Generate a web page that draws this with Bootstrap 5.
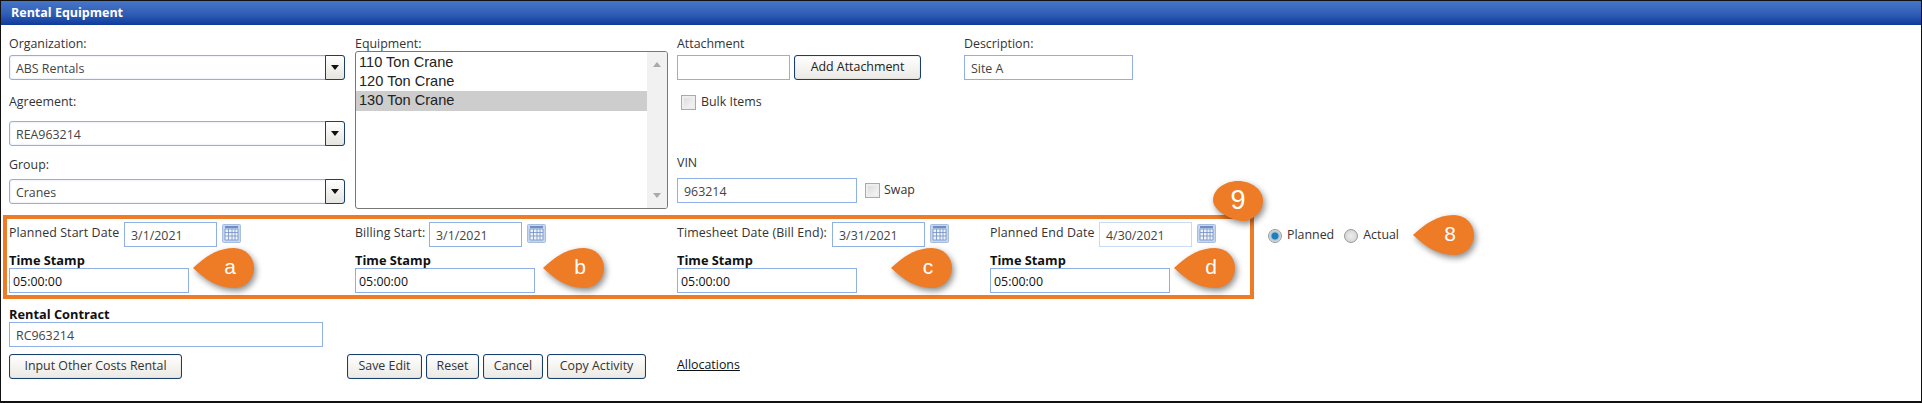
<!DOCTYPE html>
<html lang="en">
<head>
<meta charset="utf-8">
<title>Rental Equipment</title>
<link rel="stylesheet" href="https://cdn.jsdelivr.net/npm/bootstrap@5.3.0/dist/css/bootstrap.min.css">
<style>
html,body{margin:0;background:#fff}
body{font-family:"Open Sans","Noto Sans","Liberation Sans",sans-serif;font-size:12.4px;color:#333}
.sheet{width:1922px;height:403px;border:solid #111;border-width:1px 1px 2px 1px;position:relative;overflow:hidden;background:#fff}
.topbar{height:24px;background:linear-gradient(#4676c8,#2f5db5 55%,#0f3a9c);color:#fff;font-weight:700;font-size:12.5px;line-height:23px;padding-left:10px}
.upper{height:190px;padding-top:10px}
.cola{width:354px;padding-left:8px}
.colb{width:322px}
.colc{width:287px}
.cold{width:300px}
.lbl{display:block;height:20px;line-height:18px;margin:0;white-space:nowrap}
.lbl-agree{margin-top:13px;margin-bottom:8px}
.lbl-group{margin-top:10px;margin-bottom:3px}
.lbl-vin{margin-top:46px;margin-bottom:4px}
.field{height:25px;border:1px solid #8eb0e4;background:#fff;color:#444;padding-left:6px;box-sizing:border-box;white-space:nowrap;font:inherit;line-height:25px;display:block}
.pick{width:336px;border-radius:3px;display:flex;justify-content:space-between;box-shadow:inset 0 0 2px #c8d8f0;align-items:stretch}
.pick-btn{width:20px;border:1px solid #17406e;border-radius:0 3px 3px 0;margin:-1px -1px -1px 0;background:linear-gradient(#fff,#e6e4df);display:flex;align-items:center;justify-content:center}
.pick-btn i{border:solid transparent;border-width:5px 4px 0 4px;border-top-color:#111;display:block}
.equip{width:313px;height:158px;border:1px solid #777;border-radius:3px;display:flex;font:14.6px/19px "Liberation Sans",Arial,sans-serif;color:#222;margin-top:-4px;overflow:hidden}
.equip-list{flex:1;padding:1px 0 0;list-style:none;margin:0}
.equip-list li{padding-left:3px;height:19px}
.equip-list li.sel{background:#cdcdcd;height:20px}
.equip-bar{width:20px;background:#f1f1f1;display:flex;flex-direction:column;justify-content:space-between;align-items:center;padding:10px 0}
.equip-bar i{display:block;border:solid transparent;border-width:0 4px 5px 4px;border-bottom-color:#aaa}
.equip-bar i+i{border-width:5px 4px 0 4px;border-top-color:#aaa;border-bottom-color:transparent}
.act{height:25px;background:linear-gradient(#fff,#ebe9e4);border:1px solid #17406e;border-radius:3px;color:#333;font:inherit;padding:0;box-shadow:inset 0 0 1px #999}
.w-attach{width:113px}.w-addbtn{width:127px;color:#222}.w-vin{width:180px}.w-desc{width:169px}.w-contract{width:314px;margin-top:2px}
.w-other{width:173px}.w-save{width:75px}.w-reset{width:53px}.w-cancel{width:60px}.w-copy{width:99px}
.bulk{height:16px;margin:12px 0 0 4px;gap:5px;padding-top:4px}
.swap{margin-left:8px;gap:4px}
.tick{width:15px;height:15px;border:1px solid #aaa;background:linear-gradient(135deg,#d8d8d8,#fafafa);box-shadow:inset 0 0 0 2px #eee;display:inline-block;flex:none}
.frame{position:absolute;left:2px;top:214px;width:1251px;height:84px;border:4px solid #ee7b26;display:flex;padding:3px 0 0 2px}
.slot{display:flex;flex-direction:column}
.s1{width:346px}.s2{width:322px}.s3{width:313px}.s4{width:260px}
.date-row{display:flex;align-items:center;height:25px;gap:5px;margin-bottom:7px}
.date-row .field{width:93px}
.tag-1{width:110px}.tag-2{width:69px}.tag-3{width:150px}.tag-4{width:104px}
.soft{border-color:#c9daf3}
.tag-1,.tag-2,.tag-3,.tag-4{white-space:nowrap;letter-spacing:.1px;margin-top:-3px}
.cal{width:19px;height:19px;flex:none;margin-top:-3px}
.stamp{font-weight:700;color:#111;line-height:14px;height:13px;margin-top:-1px;font-size:12.8px;white-space:nowrap}
.stamp-in{width:180px;padding-left:3px;margin-top:2px;color:#111}
.lower{position:absolute;left:8px;top:306px}
.lower .stamp{margin:0 0 1px}
.bottom-row{position:absolute;left:8px;top:353px;width:800px;display:flex}
.act-group{margin-left:165px;gap:4px}
.pin{position:absolute;display:block;filter:drop-shadow(2px 3px 3px rgba(0,0,0,.45))}
.pin-wrap{position:absolute;width:62px;height:42px;top:246px}
.pin-wrap span{position:absolute;right:4px;width:42px;top:0;height:42px;text-align:center;color:#fff;font:21px/40px "Liberation Sans",Arial,sans-serif}
.p-a{left:192px}.p-b{left:542px}.p-c{left:890px}.p-d{left:1173px}.p-8{left:1412px;top:213px}
.pin-nine{position:absolute;left:1212px;top:179px;width:50px;height:44px}
.pin-nine span{position:absolute;inset:0;text-align:center;color:#fff;font:27px/40px "Liberation Sans",Arial,sans-serif}
.rad{position:absolute;top:227px;left:1267px;display:flex;align-items:center;height:15px}
.rad-dot{width:14px;height:14px;border-radius:50%;border:1px solid #999;background:radial-gradient(circle,#eee,#ccc);flex:none}
.rad-dot.on{background:radial-gradient(circle,#1f7fb8 0 3px,#a9c5d8 4px,#ddd 6px)}
.rad-txt{margin-left:5px}
.rad-dot+.rad-txt+.rad-dot{margin-left:10px}
.alloc{color:#111;text-decoration:underline;position:absolute;left:676px;top:355px}
</style>
</head>
<body>
<div class="sheet">
  <div class="topbar">Rental Equipment</div>
  <div class="upper d-flex">
    <div class="cola">
      <label class="lbl">Organization:</label>
      <div class="field pick"><span>ABS Rentals</span><span class="pick-btn"><i></i></span></div>
      <label class="lbl lbl-agree">Agreement:</label>
      <div class="field pick"><span>REA963214</span><span class="pick-btn"><i></i></span></div>
      <label class="lbl lbl-group">Group:</label>
      <div class="field pick"><span>Cranes</span><span class="pick-btn"><i></i></span></div>
    </div>
    <div class="colb">
      <label class="lbl">Equipment:</label>
      <div class="equip">
        <ul class="equip-list"><li>110 Ton Crane</li><li>120 Ton Crane</li><li class="sel">130 Ton Crane</li></ul>
        <div class="equip-bar"><i></i><i></i></div>
      </div>
    </div>
    <div class="colc">
      <label class="lbl">Attachment</label>
      <div class="d-flex gap-1"><div class="field w-attach"></div><button class="act w-addbtn">Add Attachment</button></div>
      <div class="d-flex align-items-center bulk"><span class="tick"></span><span>Bulk Items</span></div>
      <label class="lbl lbl-vin">VIN</label>
      <div class="d-flex"><div class="field w-vin">963214</div><span class="d-flex align-items-center swap"><span class="tick"></span>Swap</span></div>
    </div>
    <div class="cold">
      <label class="lbl">Description:</label>
      <div class="field w-desc">Site A</div>
    </div>
  </div>

  <div class="frame">
    <div class="slot s1">
      <div class="date-row"><span class="tag-1">Planned Start Date</span><div class="field">3/1/2021</div><svg class="cal" viewBox="0 0 19 19"><rect x=".5" y=".5" width="18" height="18" rx="1" fill="#c6d6ee" stroke="#a8bedf"/><rect x="3" y="2" width="13" height="2" fill="#6f8fc4"/><path d="M3 5h13v11H3zM3 8.5h13M3 12h13M6.5 5v11M10 5v11M13 5v11" fill="#eef3fb" stroke="#6f8fc4" stroke-width=".8"/></svg></div>
      <div class="stamp">Time Stamp</div><div class="field stamp-in">05:00:00</div>
    </div>
    <div class="slot s2">
      <div class="date-row"><span class="tag-2">Billing Start:</span><div class="field">3/1/2021</div><svg class="cal" viewBox="0 0 19 19"><rect x=".5" y=".5" width="18" height="18" rx="1" fill="#c6d6ee" stroke="#a8bedf"/><rect x="3" y="2" width="13" height="2" fill="#6f8fc4"/><path d="M3 5h13v11H3zM3 8.5h13M3 12h13M6.5 5v11M10 5v11M13 5v11" fill="#eef3fb" stroke="#6f8fc4" stroke-width=".8"/></svg></div>
      <div class="stamp">Time Stamp</div><div class="field stamp-in">05:00:00</div>
    </div>
    <div class="slot s3">
      <div class="date-row"><span class="tag-3">Timesheet Date (Bill End):</span><div class="field">3/31/2021</div><svg class="cal" viewBox="0 0 19 19"><rect x=".5" y=".5" width="18" height="18" rx="1" fill="#c6d6ee" stroke="#a8bedf"/><rect x="3" y="2" width="13" height="2" fill="#6f8fc4"/><path d="M3 5h13v11H3zM3 8.5h13M3 12h13M6.5 5v11M10 5v11M13 5v11" fill="#eef3fb" stroke="#6f8fc4" stroke-width=".8"/></svg></div>
      <div class="stamp">Time Stamp</div><div class="field stamp-in">05:00:00</div>
    </div>
    <div class="slot s4">
      <div class="date-row"><span class="tag-4">Planned End Date</span><div class="field soft">4/30/2021</div><svg class="cal" viewBox="0 0 19 19"><rect x=".5" y=".5" width="18" height="18" rx="1" fill="#c6d6ee" stroke="#a8bedf"/><rect x="3" y="2" width="13" height="2" fill="#6f8fc4"/><path d="M3 5h13v11H3zM3 8.5h13M3 12h13M6.5 5v11M10 5v11M13 5v11" fill="#eef3fb" stroke="#6f8fc4" stroke-width=".8"/></svg></div>
      <div class="stamp">Time Stamp</div><div class="field stamp-in">05:00:00</div>
    </div>
  </div>

  <div class="lower">
    <div class="stamp">Rental Contract</div>
    <div class="field w-contract">RC963214</div>
  </div>
  <div class="bottom-row">
    <button class="act w-other">Input Other Costs Rental</button>
    <div class="d-flex act-group">
      <button class="act w-save">Save Edit</button>
      <button class="act w-reset">Reset</button>
      <button class="act w-cancel">Cancel</button>
      <button class="act w-copy">Copy Activity</button>
    </div>
  </div>
  <a class="alloc" href="#">Allocations</a>

  <div class="rad"><span class="rad-dot on"></span><span class="rad-txt">Planned</span><span class="rad-dot"></span><span class="rad-txt">Actual</span></div>

  <div class="pin-wrap p-a"><svg class="pin" width="62" height="42" viewBox="0 0 62 42"><path d="M0 21C12 10 24 1 41 1a20 20 0 0 1 0 40C24 41 12 32 0 21Z" fill="#ee7b26"/></svg><span>a</span></div>
  <div class="pin-wrap p-b"><svg class="pin" width="62" height="42" viewBox="0 0 62 42"><path d="M0 21C12 10 24 1 41 1a20 20 0 0 1 0 40C24 41 12 32 0 21Z" fill="#ee7b26"/></svg><span>b</span></div>
  <div class="pin-wrap p-c"><svg class="pin" width="62" height="42" viewBox="0 0 62 42"><path d="M0 21C12 10 24 1 41 1a20 20 0 0 1 0 40C24 41 12 32 0 21Z" fill="#ee7b26"/></svg><span>c</span></div>
  <div class="pin-wrap p-d"><svg class="pin" width="62" height="42" viewBox="0 0 62 42"><path d="M0 21C12 10 24 1 41 1a20 20 0 0 1 0 40C24 41 12 32 0 21Z" fill="#ee7b26"/></svg><span>d</span></div>
  <div class="pin-wrap p-8"><svg class="pin" width="62" height="42" viewBox="0 0 62 42"><path d="M0 21C12 10 24 1 41 1a20 20 0 0 1 0 40C24 41 12 32 0 21Z" fill="#ee7b26"/></svg><span>8</span></div>
  <div class="pin-nine"><svg class="pin" width="50" height="44" viewBox="0 0 50 44"><path d="M25 1C39 1 50 10 50 21C50 31 42 38 33 41C22 42 0 32 0 20C0 10 11 1 25 1Z" fill="#ee7b26"/></svg><span>9</span></div>
</div>
<script src="https://cdn.jsdelivr.net/npm/bootstrap@5.3.0/dist/js/bootstrap.bundle.min.js"></script>
</body>
</html>
